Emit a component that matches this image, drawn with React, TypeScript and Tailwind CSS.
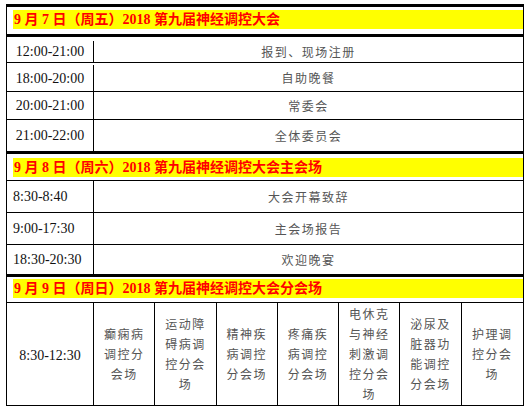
import React from "react";

const timeFont = "font-['Liberation_Serif','Noto_Sans_CJK_SC',serif] text-[14px] text-[#111]";
const cjkFont = "font-['Noto_Sans_CJK_SC',sans-serif] text-[12px] tracking-[1.5px] text-[#555]";

function DayHeader({ text, pad }: { text: string; pad: string }) {
  return (
    <div className={`pl-[6px] ${pad}`}>
      <div className="h-[19px] bg-[#ffff00] pl-[1px] flex items-center font-['Liberation_Serif','Noto_Sans_CJK_SC',serif] text-[14px] font-bold text-[#ff0000] whitespace-nowrap">
        {text}
      </div>
    </div>
  );
}

type Row = { time: string; event: string; h: string; align: string };

function ScheduleRow({ time, event, h, align }: Row) {
  return (
    <div className={`flex border-black ${h}`}>
      <div className={`w-[87px] shrink-0 border-r border-black flex items-center ${align} ${timeFont}`}>
        {time}
      </div>
      <div className={`flex-1 flex items-center justify-center ${cjkFont}`}>{event}</div>
    </div>
  );
}

const dayOne: Row[] = [
  { time: "12:00-21:00", event: "报到、现场注册", h: "h-[26px] border-b pt-[4px]", align: "justify-center" },
  { time: "18:00-20:00", event: "自助晚餐", h: "h-[29px] border-b pt-[2px]", align: "justify-center" },
  { time: "20:00-21:00", event: "常委会", h: "h-[28px] border-b", align: "justify-center" },
  { time: "21:00-22:00", event: "全体委员会", h: "h-[34px] border-b-[3px]", align: "justify-center" },
];

const dayTwo: Row[] = [
  { time: "8:30-8:40", event: "大会开幕致辞", h: "h-[32px] border-b", align: "pl-[6px]" },
  { time: "9:00-17:30", event: "主会场报告", h: "h-[32px] border-b", align: "pl-[6px]" },
  { time: "18:30-20:30", event: "欢迎晚宴", h: "h-[32px] border-b-[3px]", align: "pl-[6px]" },
];

const sessions: string[][] = [
  ["癫痫病", "调控分", "会场"],
  ["运动障", "碍病调", "控分会", "场"],
  ["精神疾", "病调控", "分会场"],
  ["疼痛疾", "病调控", "分会场"],
  ["电休克", "与神经", "刺激调", "控分会", "场"],
  ["泌尿及", "脏器功", "能调控", "分会场"],
  ["护理调", "控分会", "场"],
];

export default function App() {
  return (
    <div className="w-[529px] h-[409px] bg-white overflow-hidden">
      <div className="mt-[4px] ml-[6px] w-[518px] border-t-[3px] border-x border-black">
        <DayHeader text="9 月 7 日（周五）2018 第九届神经调控大会" pad="pt-[3px] pb-[5px] border-b-[3px] border-black" />
        {dayOne.map((r) => (
          <ScheduleRow key={r.time} {...r} />
        ))}

        <DayHeader text="9 月 8 日（周六）2018 第九届神经调控大会主会场" pad="pt-[4px] pb-[3px] border-b border-black" />
        {dayTwo.map((r) => (
          <ScheduleRow key={r.time} {...r} />
        ))}

        <DayHeader text="9 月 9 日（周日）2018 第九届神经调控大会分会场" pad="pt-[2px] pb-[4px] border-b border-black" />
        <div className="grid grid-cols-[87px_repeat(7,1fr)] h-[103px] border-b border-black">
          <div className={`border-r border-black flex items-center justify-center pt-[2px] ${timeFont}`}>8:30-12:30</div>
          {sessions.map((lines, i) => (
            <div
              key={i}
              className={`flex items-center justify-center text-center leading-[20px] border-black ${
                i < sessions.length - 1 ? "border-r" : ""
              } ${cjkFont}`}
            >
              <div>
                {lines.map((l, j) => (
                  <div key={j}>{l}</div>
                ))}
              </div>
            </div>
          ))}
        </div>
      </div>
    </div>
  );
}
